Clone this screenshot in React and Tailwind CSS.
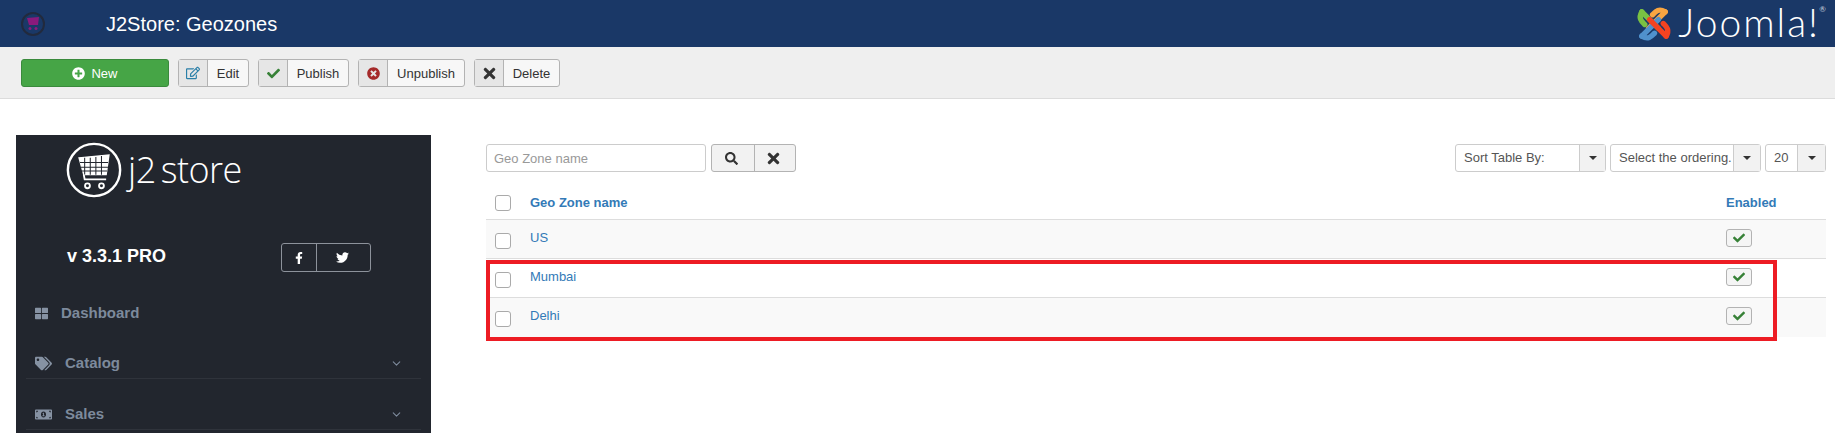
import React from 'react';
import {
  FaPlusCircle, FaRegEdit, FaCheck, FaTimesCircle, FaTimes, FaSearch,
  FaFacebookF, FaTwitter, FaThLarge, FaTags, FaMoneyBillAlt,
} from 'react-icons/fa';
import { ChevronDown } from 'lucide-react';

const CartIcon = ({ size, color, strokeWidth = 1.5, ring }) => (
  <svg width={size} height={size} viewBox="0 0 60 60" fill="none" stroke={color} strokeWidth={strokeWidth}>
    {ring && <circle cx="30" cy="30" r="28" strokeWidth="2.6" />}
    <path d="M14 17 L46 14 L43 35 L19 35 Z" fill={color} />
    <path d="M20 17v18M26 17v18M32 16v19M38 15v20M15 22h30M16 27h29M17 31h27" stroke="#22262e" strokeWidth="1.1" />
    <path d="M19 35 L20 40 L43 40" strokeWidth="2" />
    <circle cx="23" cy="47" r="2.6" strokeWidth="2" />
    <circle cx="38" cy="47" r="2.6" strokeWidth="2" />
  </svg>
);

const JoomlaMark = () => (
  <svg width="38" height="38" viewBox="0 0 39 37" fill="none" strokeLinecap="round" strokeWidth="5.5">
    <path d="M7 6 L24 23" stroke="#7ac143" />
    <path d="M7 6 C3 13 7 16 10 19" stroke="#7ac143" />
    <path d="M31 6 L14 23" stroke="#f9a541" />
    <path d="M31 6 C24 2 21 6 18 9" stroke="#f9a541" />
    <path d="M7 31 L24 14" stroke="#5091cd" />
    <path d="M7 31 C14 35 17 31 20 28" stroke="#5091cd" />
    <path d="M32 31 L15 14" stroke="#f44321" />
    <path d="M32 31 C36 24 32 21 29 18" stroke="#f44321" />
  </svg>
);

const ToolbarButton = ({ icon, label, width }) => (
  <button className={`flex h-[28px] ${width} items-stretch rounded-[3px] border border-[#b3b3b3] bg-[#f7f7f7] text-[#333]`}>
    <span className="flex w-[29px] shrink-0 items-center justify-center border-r border-[#b3b3b3] bg-[#e6e6e6]">{icon}</span>
    <span className="flex-1 text-center leading-[27px]">{label}</span>
  </button>
);

const SelectBox = ({ label, width, textWidth }) => (
  <div className={`flex h-[28px] ${width} rounded-[3px] border border-[#ccc] bg-white text-[#555]`}>
    <span className={`${textWidth} overflow-hidden whitespace-nowrap pl-[8px] leading-[26px]`}>{label}</span>
    <span className="flex flex-1 items-center justify-center border-l border-[#ccc] bg-[#f2f2f2]">
      <span className="h-0 w-0 border-x-[4px] border-t-[4px] border-x-transparent border-t-[#333]" />
    </span>
  </div>
);

const NavItem = ({ icon, label, gap, height, arrow, divider }) => (
  <div className={`flex ${height} items-center pr-[18px] pl-[9px] ${divider ? 'border-b border-[#2f333b]' : ''}`}>
    <span className={`flex ${gap} items-center text-[#8692a3]`}>{icon}</span>
    <span className="flex-1 text-[15px] font-bold text-[#7d8a9c]">{label}</span>
    {arrow && <ChevronDown size={13} className="text-[#7d8a9c]" />}
  </div>
);

const rows = [
  { name: 'US', striped: true, line: true },
  { name: 'Mumbai', striped: false, line: true },
  { name: 'Delhi', striped: true, line: false },
];

const App = () => {
  return (
    <div className="relative h-[433px] w-[1835px] overflow-hidden bg-white font-['Liberation_Sans',sans-serif] text-[13px]">
      <header className="flex h-[47px] items-center justify-between bg-[#1a3867] pl-[21px] pr-[15px]">
        <div className="flex items-center">
          <span className="flex h-[24px] w-[24px] items-center justify-center rounded-full border-2 border-[#222a3d] bg-[#1a3867]">
            <svg width="14" height="15" viewBox="0 0 14 15">
              <path d="M1 2 L13 1 L12 9 L3 9 Z" fill="#8a1a7c" />
              <circle cx="4" cy="12.5" r="1.5" fill="#8a1a7c" />
              <circle cx="10" cy="12.5" r="1.5" fill="#8a1a7c" />
            </svg>
          </span>
          <h1 className="ml-[61px] text-[20px] leading-[26px] text-white">J2Store: Geozones</h1>
        </div>
        <div className="flex items-center gap-[5px]">
          <JoomlaMark />
          <span className="relative -mt-[3px] font-['Lato',sans-serif] text-[39px] leading-[40px] font-light tracking-[2px] text-white">
            Joomla!
            <span className="absolute top-[3px] -right-[6px] text-[8px] leading-[8px] font-normal tracking-normal text-[#c8d0dc]">®</span>
          </span>
        </div>
      </header>

      <div className="flex h-[52px] items-center gap-[9px] border-b border-[#dcdcdc] bg-[#efefef] pt-[1px] pl-[21px]">
        <button className="flex h-[28px] w-[148px] items-center justify-center gap-[6px] rounded-[3px] border border-[#3a8a3c] bg-[#46a546] leading-[27px] text-white">
          <FaPlusCircle size={13} />
          New
        </button>
        <ToolbarButton width="w-[71px]" label="Edit" icon={<FaRegEdit size={14} className="text-[#2a7fa8]" />} />
        <ToolbarButton width="w-[91px]" label="Publish" icon={<FaCheck size={13} className="text-[#378137]" />} />
        <ToolbarButton width="w-[107px]" label="Unpublish" icon={<FaTimesCircle size={13} className="text-[#a52a2a]" />} />
        <ToolbarButton width="w-[86px]" label="Delete" icon={<FaTimes size={17} className="text-[#333]" />} />
      </div>

      <div className="flex pt-[36px] pl-[16px]">
        <aside className="h-[298px] w-[415px] shrink-0 bg-[#22262e] px-[10px]">
          <div className="flex items-center pt-[7px] pl-[40px]">
            <CartIcon size={56} color="#fff" ring />
            <span className="ml-[6px] font-['Open_Sans',sans-serif] text-[36px] leading-[44px] font-light tracking-[-0.5px] text-white">
              j2<span className="ml-[5px]">store</span>
            </span>
          </div>
          <div className="mt-[45px] flex items-center pl-[41px]">
            <span className="-mt-[3px] w-[214px] text-[18px] font-bold text-white">v 3.3.1 PRO</span>
            <div className="flex h-[29px] w-[90px] rounded-[3px] border border-[#8d929b] text-white">
              <span className="flex w-[35px] items-center justify-center border-r border-[#8d929b]"><FaFacebookF size={12} /></span>
              <span className="flex flex-1 items-center justify-start pl-[19px]"><FaTwitter size={13} /></span>
            </div>
          </div>
          <div className="mt-[20px]">
            <NavItem height="h-[42px]" gap="w-[26px]" label="Dashboard" icon={<FaThLarge size={13} />} />
            <NavItem height="h-[45px] pt-[15px]" gap="w-[30px]" label="Catalog" arrow divider icon={<FaTags size={17} />} />
            <NavItem height="h-[51px] pt-[21px]" gap="w-[30px]" label="Sales" arrow divider icon={<FaMoneyBillAlt size={17} />} />
          </div>
        </aside>

        <main className="ml-[55px] w-[1340px]">
          <div className="mt-[9px] flex items-center">
            <input
              readOnly
              placeholder="Geo Zone name"
              className="h-[28px] w-[220px] rounded-[3px] border border-[#ccc] bg-white px-[7px] text-[13px] placeholder:text-[#999]"
            />
            <div className="ml-[5px] flex h-[28px] w-[85px] rounded-[3px] border border-[#b3b3b3] bg-[#f2f2f2] text-[#333]">
              <span className="flex w-[43px] items-center justify-center border-r border-[#b3b3b3] pr-[4px]"><FaSearch size={13} /></span>
              <span className="flex flex-1 items-center justify-center pr-[4px]"><FaTimes size={17} /></span>
            </div>
            <div className="ml-auto flex gap-[4px]">
              <SelectBox label="Sort Table By:" width="w-[151px]" textWidth="w-[123px]" />
              <SelectBox label="Select the ordering." width="w-[151px]" textWidth="w-[122px]" />
              <SelectBox label="20" width="w-[61px]" textWidth="w-[31px]" />
            </div>
          </div>

          <div className="mt-[12px] flex h-[36px] items-center border-b border-[#ddd] pt-[2px] font-bold">
            <input type="checkbox" readOnly className="ml-[9px] h-[16px] w-[16px] appearance-none rounded-[3px] border border-[#aaa] bg-white" />
            <span className="ml-[19px] flex-1 text-[#337ab7]">Geo Zone name</span>
            <span className="w-[100px] text-[#337ab7]">Enabled</span>
          </div>
          {rows.map((row) => (
            <div key={row.name} className={`flex h-[39px] ${row.line ? 'border-b border-[#ddd]' : ''} ${row.striped ? 'bg-[#f9f9f9]' : 'bg-white'}`}>
              <input type="checkbox" readOnly className="mt-[13px] ml-[9px] h-[16px] w-[16px] appearance-none rounded-[3px] border border-[#aaa] bg-white" />
              <span className="ml-[19px] flex-1 pt-[8px] text-[#337ab7]">{row.name}</span>
              <span className="w-[100px] pt-[9px]">
                <span className="flex h-[18px] w-[26px] items-center justify-center rounded-[3px] border border-[#b3b3b3] bg-[#f5f5f5]">
                  <FaCheck size={12} className="text-[#378137]" />
                </span>
              </span>
            </div>
          ))}
        </main>
      </div>

      <div className="absolute top-[260px] left-[486px] h-[81px] w-[1291px] border-[4px] border-[#ed1c24]" />
    </div>
  );
};

export default App;
